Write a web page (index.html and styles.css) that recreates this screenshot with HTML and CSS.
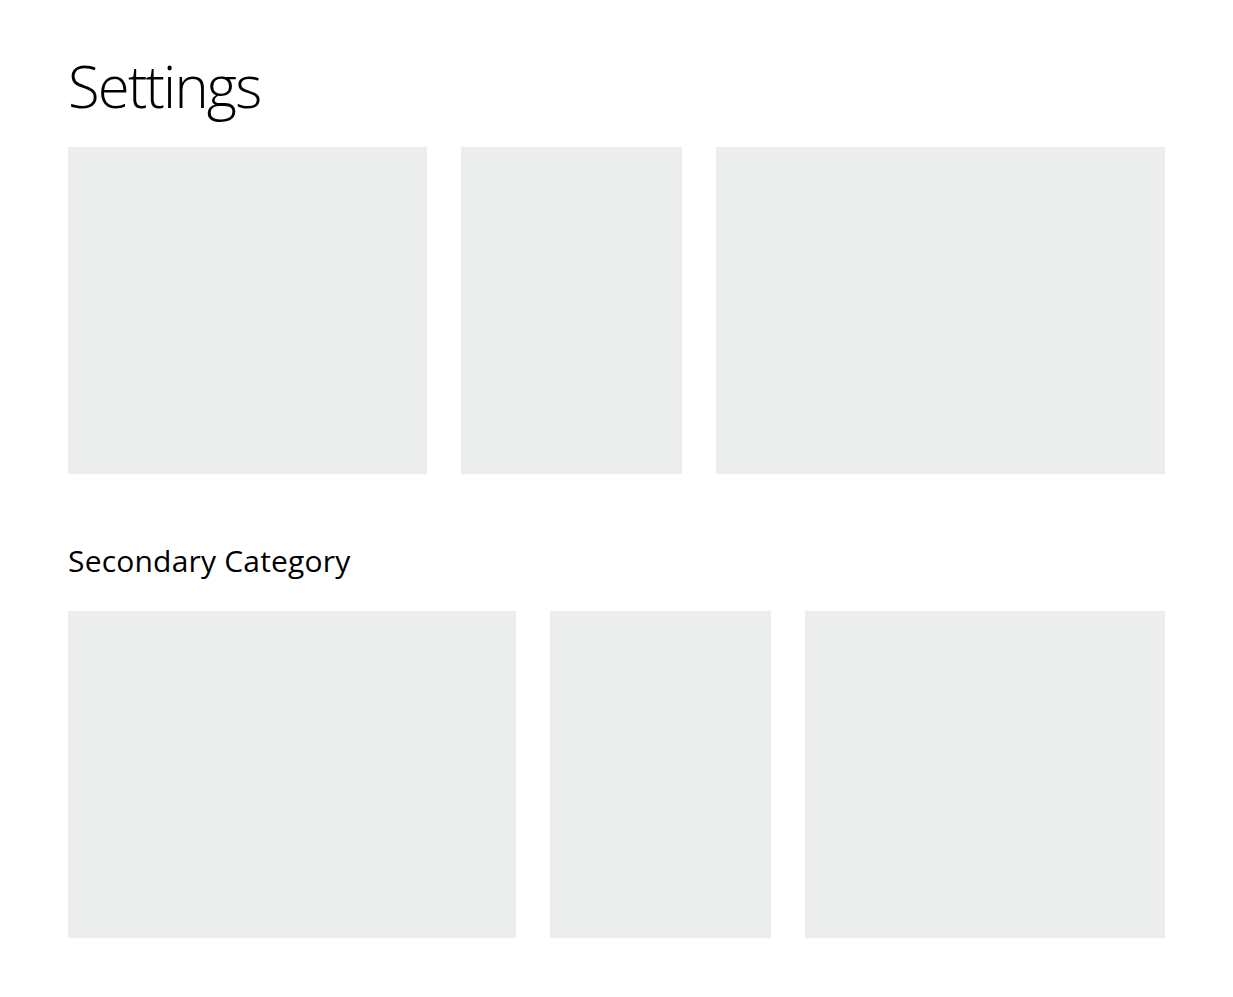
FILE: index.html
```html
<!DOCTYPE html>
<html lang="en">
<head>
<meta charset="utf-8">
<title>Settings</title>
<link rel="stylesheet" href="styles.css">
</head>
<body>
<main class="page">
  <h1 class="title">Settings</h1>
  <section class="row row-primary">
    <div class="tile"></div>
    <div class="tile"></div>
    <div class="tile"></div>
  </section>
  <h2 class="subtitle">Secondary Category</h2>
  <section class="row row-secondary">
    <div class="tile"></div>
    <div class="tile"></div>
    <div class="tile"></div>
  </section>
</main>
</body>
</html>
```
FILE: styles.css
```css
html, body {
  margin: 0;
  padding: 0;
  background: #ffffff;
}
body {
  font-family: "Open Sans", "Noto Sans", sans-serif;
  color: #000000;
}
.page {
  width: 1097px;
  padding: 0 0 0 68px;
  box-sizing: content-box;
}
.title {
  margin: 0 0 25px 0;
  padding-top: 50px;
  font-weight: 300;
  font-size: 58px;
  line-height: 72px;
  letter-spacing: -1.8px;
}
.row {
  display: grid;
  gap: 34px;
  height: 327px;
}
.row-primary {
  grid-template-columns: 359px 221px 449px;
}
.row-secondary {
  grid-template-columns: 448px 221px 360px;
}
.tile {
  background: #eceeed;
}
.subtitle {
  margin: 0 0 30px 0;
  padding-top: 67px;
  font-weight: 400;
  font-size: 30px;
  line-height: 40px;
  letter-spacing: 0.2px;
}
```
